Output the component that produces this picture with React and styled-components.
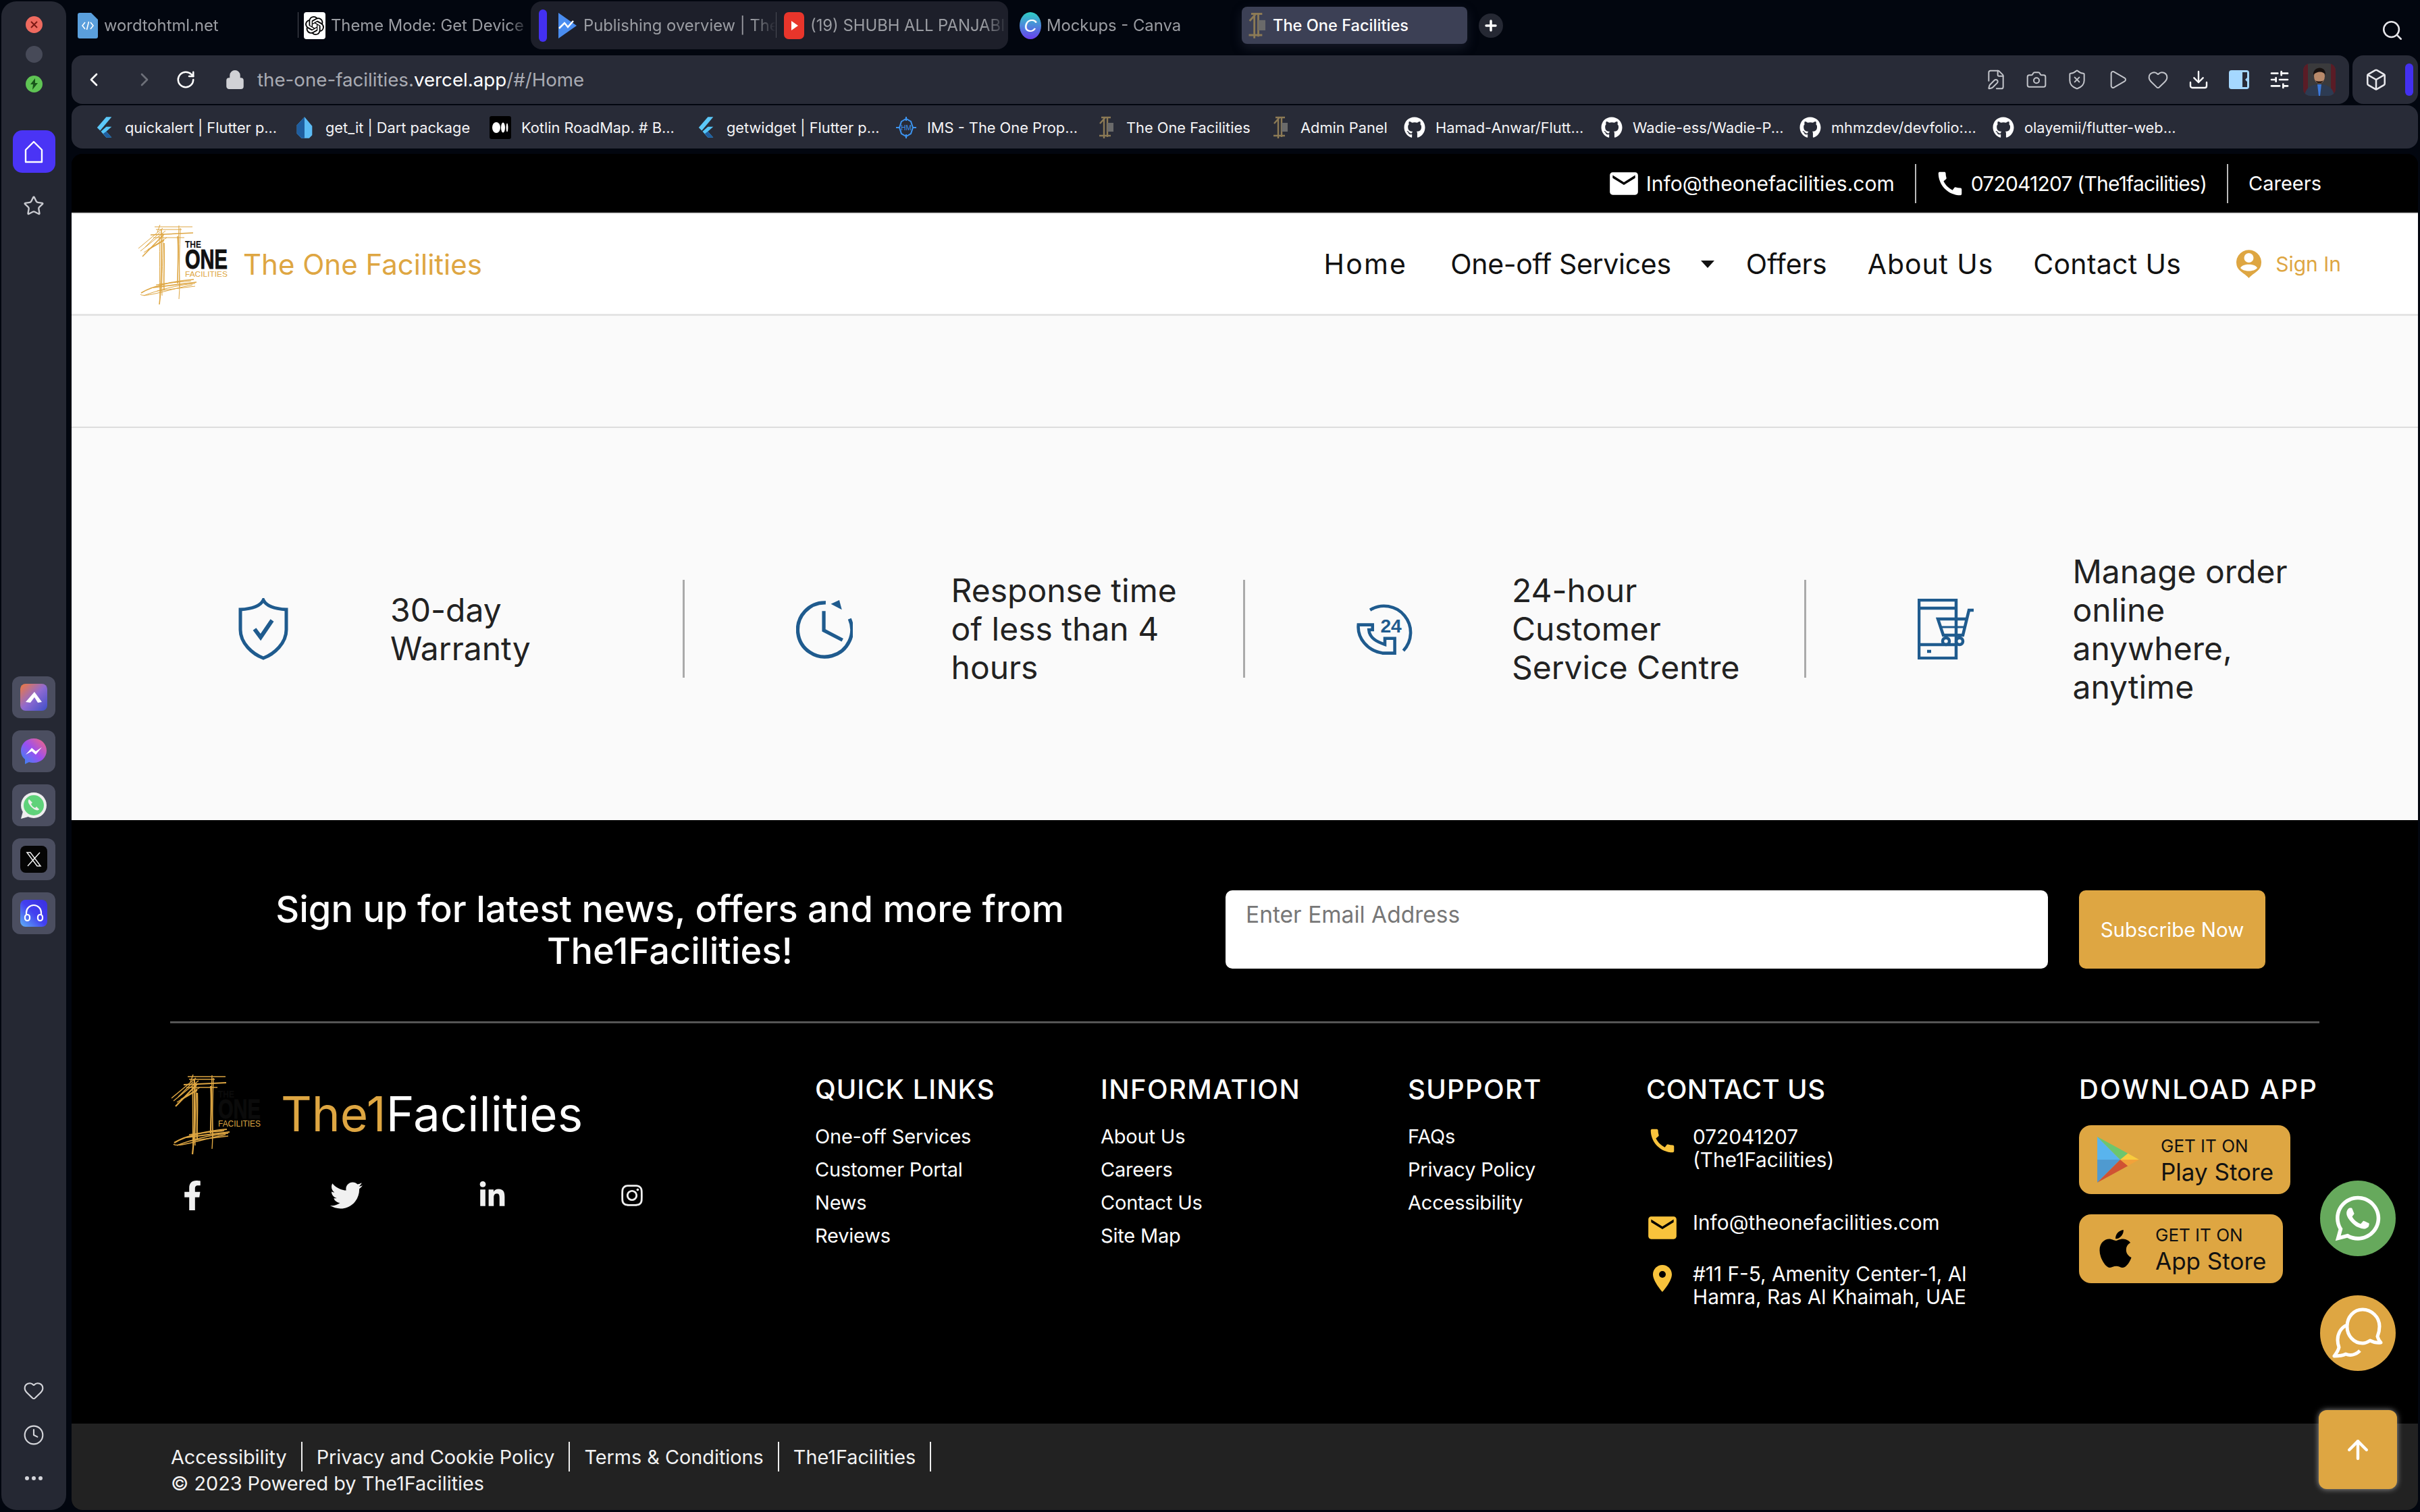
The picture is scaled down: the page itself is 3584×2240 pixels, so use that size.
import React from 'react';
import styled, { createGlobalStyle } from 'styled-components';
import { ChevronLeft, ChevronRight, RotateCw, Lock, FilePen, Camera, ShieldX, Play, Heart, Download, SlidersHorizontal, Box, Star, Clock, Search, Plus, ArrowUp } from 'lucide-react';
import { FaFacebookF, FaTwitter, FaLinkedinIn, FaInstagram, FaWhatsapp, FaApple, FaGithub } from 'react-icons/fa';
import { MdCall, MdEmail, MdLocationOn } from 'react-icons/md';
import { SiOpenai } from 'react-icons/si';

const UI = '"Inter", "Liberation Sans", sans-serif';
const SITE = '"Inter", "Open Sans", sans-serif';
const GOLD = '#dea642';
const BLUE = '#1f5b8e';

const Global = createGlobalStyle`
  html, body { margin: 0; padding: 0; background: #02060f; }
  * { box-sizing: border-box; }
`;

const Screen = styled.div`
  position: relative; width: 3584px; height: 2240px; background: #02060f; display: flex; overflow: hidden; font-family: ${UI};
`;
const Sidebar = styled.aside`
  width: 96px; margin: 2px 0 3px 2px; background: #252833; border-radius: 22px; display: flex; flex-direction: column; align-items: center; padding: 22px 0 44px;
`;
const Light = styled.span`
  width: 25px; height: 25px; border-radius: 50%; background: ${p => p.$c}; margin-bottom: 19px; display: flex; align-items: center; justify-content: center;
`;
const HomeButton = styled.div`
  width: 63px; height: 63px; margin-top: 37px; border-radius: 14px; background: #4a34f5; display: flex; align-items: center; justify-content: center;
`;
const SideStar = styled.div`
  margin-top: 33px; height: 32px; color: #c9cad0; display: flex;
`;
const AppStack = styled.div`
  margin-top: 681px; display: flex; flex-direction: column; gap: 18px;
`;
const AppTile = styled.div`
  width: 64px; height: 62px; border-radius: 12px; background: #4b4e60; display: flex; align-items: center; justify-content: center;
`;
const SideBottom = styled.div`
  margin-top: auto; display: flex; flex-direction: column; align-items: center; gap: 34px; color: #d4d5da;
`;
const MoreDots = styled.div`
  display: flex; gap: 4px; margin-top: 11px;
  i { width: 6px; height: 6px; border-radius: 50%; background: #d4d5da; }
`;
const Main = styled.main`
  width: 3475px; margin: 0 0 3px 8px; display: flex; flex-direction: column;
`;
const TabStrip = styled.div`
  height: 82px; display: flex; align-items: flex-start; padding-top: 2px; color: #9a9ca2;
`;
const Tab = styled.div`
  width: ${p => p.$w}px; height: 71px; padding-left: ${p => p.$pl}px; display: flex; align-items: center; gap: 8px; font-size: 23.8px; overflow: hidden; white-space: nowrap; flex: none;
`;
const TabLabel = styled.span`
  min-width: 0; flex: 1; overflow: hidden; padding-right: ${p => p.$pr || 0}px;
  -webkit-mask-image: linear-gradient(90deg, #000 88%, transparent 100%);
  mask-image: linear-gradient(90deg, #000 88%, transparent 100%);
`;
const TabIcon = styled.span`
  width: 32px; height: 40px; flex: none; display: flex; align-items: center; justify-content: center;
`;
const OpenAiTile = styled.span`
  width: 32px; height: 40px; flex: none; border-radius: 4px; background: #fff; color: #000; display: flex; align-items: center; justify-content: center;
`;
const TabRule = styled.span`
  width: 1px; height: 38px; margin-top: 16px; background: #4a4c55; flex: none;
`;
const TabGroup = styled.div`
  width: 707px; height: 71px; border-radius: 16px; background: #1d1f2a; display: flex; align-items: flex-start; padding-left: 12px; flex: none;
`;
const GroupBar = styled.span`
  width: 12px; height: 48px; margin-top: 12px; border-radius: 6px; background: #4330f0; flex: none;
`;
const ActiveTab = styled.div`
  width: 334px; height: 55px; margin-top: 8px; padding-left: 7px; border-radius: 8px; background: #3c4055; color: #fff; display: flex; align-items: center; gap: 11px; font-size: 23.6px; font-weight: 500; box-shadow: 0 6px 16px rgba(60, 64, 85, .35); flex: none;
`;
const NewTab = styled.div`
  width: 36px; height: 36px; margin: 18px 0 0 17px; border-radius: 50%; background: #252833; color: #fff; display: flex; align-items: center; justify-content: center;
`;
const SearchBtn = styled.div`
  margin: 26px 21px 0 auto; color: #e6e6ea; display: flex;
`;
const AddressRow = styled.div`
  display: flex; gap: 5px; height: 72px;
`;
const AddressBar = styled.div`
  flex: 1; background: #282b37; border-radius: 16px; display: flex; align-items: center; padding: 0 20px 0 17px;
`;
const NavIcon = styled.span`
  width: 32px; display: flex; justify-content: center; margin-right: ${p => p.$mr}px; color: ${p => p.$c};
`;
const Url = styled.div`
  font-size: 27.7px; color: #a9abb3; white-space: nowrap; b { font-weight: 400; color: #fff; }
`;
const ToolIcons = styled.div`
  margin-left: auto; display: flex; align-items: center; color: #c3c5cb;
`;
const ToolIcon = styled.span`
  width: 60px; display: flex; justify-content: center;
`;
const Avatar = styled.span`
  width: 48px; height: 48px; margin-left: 5px; border-radius: 10px; overflow: hidden; display: flex;
`;
const ExtBox = styled.div`
  width: 97px; background: #282b37; border-radius: 16px; display: flex; align-items: center; padding-left: 18px; color: #e8e8ec; gap: 26px;
`;
const ExtBar = styled.span`
  width: 12px; height: 48px; border-radius: 6px; background: #4330f0;
`;
const Bookmarks = styled.div`
  height: 64px; margin-top: 2px; background: #282b37; border-radius: 16px; display: flex; align-items: center; padding: 2px 0 0 31px;
`;
const Bookmark = styled.div`
  width: ${p => p.$w}px; flex: none; display: flex; align-items: center; gap: 14px; font-size: 21.8px; color: #f4f4f6; white-space: nowrap;
`;
const BookIcon = styled.span`
  width: 34px; height: 34px; display: flex; align-items: center; justify-content: center; flex: none; color: #fff;
`;
const Page = styled.div`
  margin-top: 8px; flex: 1; border-radius: 16px; overflow: hidden; display: flex; flex-direction: column; font-family: ${SITE}; background: #000;
`;
const TopBar = styled.div`
  height: 87px; background: #000; color: #fff; display: flex; align-items: center; justify-content: flex-end; padding-right: 143px; font-size: 30px; flex: none;
`;
const TopItem = styled.div`
  display: flex; align-items: center; gap: 8px; white-space: nowrap; font-size: ${p => p.$fs || 30}px; letter-spacing: ${p => p.$ls || 0}px;
`;
const TopRule = styled.span`
  width: 2px; height: 58px; background: #bbb; margin: 0 ${p => p.$r}px 0 ${p => p.$l}px;
`;
const Nav = styled.nav`
  height: 153px; flex: none; background: #fff; border-top: 2px solid #ddd; border-bottom: 3px solid #e4e4e4; display: flex; align-items: center; padding: 0 114px 0 97px;
`;
const BrandTitle = styled.div`
  margin-left: 23px; font-size: 42px; color: ${GOLD}; white-space: nowrap;
`;
const NavLinks = styled.div`
  margin-left: auto; display: flex; align-items: center; color: #111; font-size: 41px;
`;
const NavLink = styled.span`
  margin-left: ${p => p.$ml}px; letter-spacing: ${p => p.$ls || 0}px; white-space: nowrap;
`;
const Caret = styled.span`
  margin-left: ${p => p.$ml}px; width: 0; height: 0; border-left: 10px solid transparent; border-right: 10px solid transparent; border-top: 11px solid #111;
`;
const SignIn = styled.div`
  margin-left: 82px; display: flex; align-items: center; gap: 21px; color: ${GOLD}; font-size: 30px; white-space: nowrap;
`;
const Spacer = styled.div`
  height: 166px; flex: none; background: #fafafa; border-bottom: 2px solid #ddd;
`;
const Features = styled.section`
  height: 581px; flex: none; background: #fafafa; padding: 14px 0 0 77px; display: grid; grid-template-columns: repeat(4, 830.5px); align-items: center;
`;
const Feature = styled.div`
  height: 145px; display: flex; align-items: center; padding-left: 165px; border-right: ${p => (p.$last ? 'none' : '3px solid #aaa')};
`;
const FeatureIcon = styled.div`
  width: 84px; flex: none; display: flex; justify-content: center; margin-right: 146px;
`;
const FeatureText = styled.div`
  font-size: 48px; line-height: 57px; color: #222; white-space: nowrap;
`;
const Footer = styled.footer`
  flex: 1; background: #000; color: #fff; padding: 100px 146px 0;
`;
const Signup = styled.div`
  display: flex; align-items: center;
`;
const SignupTitle = styled.h2`
  width: 1480px; margin: 0 83px 0 0; font-size: 54.2px; line-height: 62px; font-weight: 500; text-align: center; flex: none;
`;
const EmailInput = styled.input`
  width: 1218px; height: 116px; flex: none; border: none; border-radius: 10px; background: #fff; padding: 0 30px 44px; font-family: ${SITE}; font-size: 33.5px;
  &::placeholder { color: #777; opacity: 1; }
`;
const Subscribe = styled.button`
  width: 276px; height: 116px; margin-left: 46px; border: none; border-radius: 10px; background: ${GOLD}; color: #fff; font-family: ${SITE}; font-size: 29.5px; flex: none;
`;
const FooterRule = styled.div`
  height: 3px; margin-top: 74px; background: #555;
`;
const FooterGrid = styled.div`
  margin-top: 73px; display: grid; grid-template-columns: 955px 423px 455px 353px 641px auto;
`;
const BrandRow = styled.div`
  display: flex; align-items: center; gap: 30px;
`;
const FooterBrand = styled.div`
  font-size: 71px; font-weight: 400; white-space: nowrap; span { color: ${GOLD}; }
`;
const Socials = styled.div`
  display: flex; margin-top: 30px;
`;
const Social = styled.a`
  width: 66px; height: 60px; margin-left: ${p => p.$ml}px; display: flex; align-items: center; justify-content: center; color: #f0f0f0;
`;
const ColTitle = styled.h3`
  margin: 0; font-size: 40px; line-height: 50px; font-weight: 500; white-space: nowrap; letter-spacing: ${p => p.$ls}px;
`;
const LinkList = styled.div`
  margin-top: 20px; display: flex; flex-direction: column; font-size: 29px; line-height: 49px; letter-spacing: -0.2px;
`;
const ContactRow = styled.div`
  display: flex; margin-top: ${p => p.$mt}px; font-size: 29.8px; line-height: 34px; white-space: nowrap;
`;
const ContactIcon = styled.span`
  width: 48px; height: 34px; margin-right: 21px; flex: none; display: flex; align-items: flex-start; justify-content: center; color: #f8c33c;
  svg { flex: none; }
`;
const StoreBtn = styled.div`
  width: ${p => p.$w}px; height: 102px; margin-top: ${p => p.$mt}px; border-radius: 18px; background: ${GOLD}; color: #111; display: flex; align-items: center; padding-left: ${p => p.$pl}px; gap: ${p => p.$gap}px;
`;
const StoreText = styled.div`
  display: flex; flex-direction: column; white-space: nowrap; font-size: 35px; line-height: 40px;
  small { font-size: 26px; line-height: 36px; }
`;
const BottomBar = styled.div`
  height: 128px; flex: none; background: #222; color: #f2f2f2; padding: 27px 0 0 147px; font-size: 28.8px;
`;
const LegalRow = styled.div`
  height: 44px; display: flex; align-items: center;
`;
const LegalLink = styled.span`
  height: 44px; display: flex; align-items: center; padding: 0 21px; border-right: 2px solid #eee; white-space: nowrap;
  &:first-child { padding-left: 0; }
`;
const Copyright = styled.div`
  line-height: 36px;
`;
const Floater = styled.div`
  position: absolute; left: 3436px; top: ${p => p.$top}px; width: 112px; height: 112px; border-radius: 50%; background: ${p => p.$bg}; color: #fff; display: flex; align-items: center; justify-content: center;
`;
const ScrollTop = styled.div`
  position: absolute; left: 3434px; top: 2089px; width: 116px; height: 117px; border-radius: 12px; background: ${GOLD}; color: #fff; display: flex; align-items: center; justify-content: center; box-shadow: 0 0 8px rgba(255, 255, 255, .55);
`;

const Flutter = () => (
  <svg width="28" height="34" viewBox="0 0 24 30">
    <path d="M15 1 3 15l4 4L22 1z" fill="#5cc8f8" />
    <path d="M15 14 8 20l7 8h7l-7-8 7-6z" fill="#54c5f8" />
    <path d="M11 23l4-3 7 8h-7z" fill="#1f5e9f" />
  </svg>
);
const Dart = () => (
  <svg width="28" height="34" viewBox="0 0 24 30">
    <path d="M12 1 2 12v11l6 6h10l4-4V13z" fill="#5cbcf6" />
    <path d="M2 12 12 1v28H8l-6-6z" fill="#1f5e9f" />
  </svg>
);
const Medium = () => (
  <svg width="32" height="34" viewBox="0 0 32 34">
    <rect width="32" height="34" rx="3" fill="#000" />
    <ellipse cx="10" cy="17" rx="6" ry="8" fill="#fff" /><ellipse cx="20" cy="17" rx="3" ry="7.5" fill="#fff" /><ellipse cx="26" cy="17" rx="1.4" ry="6.5" fill="#fff" />
  </svg>
);
const Ims = () => (
  <svg width="32" height="34" viewBox="0 0 32 34" fill="none" stroke="#3d94f0" strokeWidth="2">
    <path d="M16 1v6M16 27v6M1 17h6M25 17h6M9 8l7-4 7 4 3 9-3 9-7 4-7-4-3-9z" />
    <text x="16" y="21" fontSize="10" fontFamily="Liberation Sans" textAnchor="middle" fill="#3d94f0" stroke="none">HM</text>
  </svg>
);
const MiniLogo = ({ w = 24, h = 36 }) => (
  <svg width={w} height={h} viewBox="0 0 24 36" fill="none">
    <path d="M10 2v32M15 2v30M4 12 12 3M6 3h14M3 30h17" stroke="#8c7a55" strokeWidth="2.4" />
    <rect x="15" y="11" width="9" height="13" fill="#6a6a6a" />
  </svg>
);

const SCRIBBLE = [
  'M36 10C35 40 38 80 33 121', 'M38 16C39 50 36 80 37 108', 'M33 20C34 50 33 80 34 112', 'M40 30C41 60 39 80 40 100',
  'M62 4C60 40 65 80 62 113', 'M64 8C63 40 62 70 63 95', 'M60 20C62 40 60 70 60 90',
  'M2 38L38 8', 'M5 42L42 12', 'M8 50L40 17', 'M12 36L34 14', 'M10 44L44 22', 'M16 40L40 26',
  'M26 6H82', 'M28 10H66', 'M20 18L83 15', 'M24 22H70', 'M34 3L30 14',
  'M6 104C25 92 60 86 84 84', 'M10 108C30 100 60 92 86 90', 'M5 106C10 112 50 98 82 92', 'M24 96L88 88', 'M30 101L86 94', 'M28 92C50 88 70 88 80 86',
];
const LogoSvg = styled.svg`
  overflow: visible; flex: none;
`;
const Logo = ({ dark }) => (
  <LogoSvg width="134" height="122" viewBox="0 0 134 122" fill="none">
    {SCRIBBLE.map((d, i) => <path key={d} d={d} stroke={GOLD} strokeWidth={(i % 3 === 0 ? 1.6 : 1) * (dark ? 1.4 : 1)} />)}
    <g fontFamily="Liberation Sans" fontWeight="700">
      <text x="71" y="37" fontSize="15" textLength="24" lengthAdjust="spacingAndGlyphs" fill={dark ? '#0b0b0b' : '#111'}>THE</text>
      <text x="71" y="68" fontSize="40" textLength="63" lengthAdjust="spacingAndGlyphs" fill={dark ? '#0b0b0b' : '#111'} stroke={dark ? '#0b0b0b' : '#111'} strokeWidth="1">ONE</text>
      <text x="71" y="80" fontSize={dark ? 13 : 11} fontWeight="400" textLength="63" lengthAdjust="spacingAndGlyphs" fill={GOLD}>FACILITIES</text>
    </g>
  </LogoSvg>
);
const ShieldIcon = () => (
  <svg width="76" height="92" viewBox="0 0 76 92" fill="none" stroke={BLUE} strokeWidth="5">
    <path d="M38 3C34 11 24 16 4 17V47C4 67 22 83 38 89C54 83 72 67 72 47V17C52 16 42 11 38 3Z" />
    <path d="M25 46L34 58L51 33" strokeWidth="6" />
  </svg>
);
const ClockIcon = () => (
  <svg width="88" height="90" viewBox="0 0 88 90" fill="none" stroke={BLUE} strokeWidth="5.5">
    <path d="M46 4A42 42 0 1 0 83 29" />
    <path d="M54 6L67 0L71 15Z" fill={BLUE} stroke="none" />
    <path d="M43 17V47L72 62" />
  </svg>
);
const Support24 = () => (
  <svg width="92" height="90" viewBox="0 0 92 90" fill="none" stroke={BLUE} strokeWidth="5">
    <path d="M22 14A43 43 0 0 1 76 80" />
    <path d="M3 38H26V46H20C21 60 34 66 46 70V60H62V84H42C18 80 1 60 3 38Z" />
    <text x="56" y="50" fontSize="31" fontWeight="700" fontFamily="Liberation Sans" textAnchor="middle" fill={BLUE} stroke="none">24</text>
  </svg>
);
const CartIcon = () => (
  <svg width="84" height="90" viewBox="0 0 84 90" fill="none" stroke={BLUE} strokeWidth="4.5">
    <rect x="2" y="2" width="55" height="86" />
    <path d="M2 14H57M2 68H57M14 78H20" />
    <path d="M83 17H76L67 54H38L30 30H72" />
    <path d="M34 42H70" strokeWidth="3" />
    <circle cx="42" cy="63" r="5" /><circle cx="62" cy="63" r="5" />
  </svg>
);
const SignInIcon = () => (
  <svg width="37" height="42" viewBox="0 0 37 42">
    <path d="M18.5 42C15 37 5 33 1.5 26A18.5 18.5 0 1 1 35.5 26C32 33 22 37 18.5 42Z" fill={GOLD} />
    <circle cx="18.5" cy="12" r="7" fill="#fff" />
    <path d="M6 27C9 20 28 20 31 27C26 33 11 33 6 27Z" fill="#fff" />
  </svg>
);
const PlayLogo = () => (
  <svg width="62" height="68" viewBox="0 0 60 66">
    <path d="M0 0 33 33H0z" fill="#59b4ee" /><path d="M0 66 33 33H0z" fill="#4f9ad0" />
    <path d="M0 0 44 24 33 33z" fill="#6cc66e" /><path d="M0 66 44 42 33 33z" fill="#cf5233" />
    <path d="M44 24 60 33H33z" fill="#f8cb3f" /><path d="M44 42 60 33H33z" fill="#f2a23a" />
  </svg>
);
const Avatarface = () => (
  <svg width="48" height="48" viewBox="0 0 48 48">
    <rect width="48" height="48" fill="#3a3a3c" /><rect width="7" height="48" fill="#5a1c26" /><rect x="41" width="7" height="48" fill="#5a1c26" />
    <path d="M2 48C4 34 14 31 24 31S44 34 46 48z" fill="#2d3b52" />
    <path d="M21 31h6l-2 17h-2z" fill="#3c78d8" />
    <ellipse cx="24" cy="19" rx="8" ry="11" fill="#b98a6a" />
    <path d="M15 17C14 4 34 2 33 17C30 11 20 11 15 17Z" fill="#17110f" />
    <path d="M18 25C21 31 27 31 30 25C28 27 20 27 18 25Z" fill="#221815" />
  </svg>
);

const TABS_BOOK = [
  [297, <Flutter />, 'quickalert | Flutter p...'], [290, <Dart />, 'get_it | Dart package'], [304, <Medium />, 'Kotlin RoadMap. # B...'],
  [297, <Flutter />, 'getwidget | Flutter p...'], [295, <Ims />, 'IMS - The One Prop...'], [258, <MiniLogo />, 'The One Facilities'],
  [200, <MiniLogo />, 'Admin Panel'], [292, <FaGithub size={32} />, 'Hamad-Anwar/Flutt...'], [294, <FaGithub size={32} />, 'Wadie-ess/Wadie-P...'],
  [286, <FaGithub size={32} />, 'mhmzdev/devfolio:...'], [280, <FaGithub size={32} />, 'olayemii/flutter-web...'],
];
const COLS = [
  ['QUICK LINKS', 1, ['One-off Services', 'Customer Portal', 'News', 'Reviews']],
  ['INFORMATION', 1.4, ['About Us', 'Careers', 'Contact Us', 'Site Map']],
  ['SUPPORT', 1.3, ['FAQs', 'Privacy Policy', 'Accessibility']],
];

export default function App() {
  return (
    <Screen>
      <Global />
      <Sidebar>
        <Light $c="#ee6a5f"><svg width="13" height="13" viewBox="0 0 13 13" stroke="#7c1a14" strokeWidth="2"><path d="M2 2l9 9M11 2l-9 9" /></svg></Light>
        <Light $c="#474a58" />
        <Light $c="#5fc454"><svg width="13" height="17" viewBox="0 0 13 17" fill="#18561a"><path d="M8 0 1 9h4l-1 8 8-10H8z" /></svg></Light>
        <HomeButton><svg width="34" height="36" viewBox="0 0 34 36" fill="none" stroke="#fff" strokeWidth="2.4"><path d="M17 3 5 15v18h24V15z" strokeLinejoin="round" /></svg></HomeButton>
        <SideStar><Star size={32} strokeWidth={1.8} /></SideStar>
        <AppStack>
          <AppTile><svg width="40" height="40" viewBox="0 0 40 40"><defs><linearGradient id="ar" x1="0" y1="0" x2="1" y2="1"><stop offset="0" stopColor="#f0793b" /><stop offset=".5" stopColor="#8f6ad0" /><stop offset="1" stopColor="#3d4fc8" /></linearGradient></defs><rect width="40" height="40" rx="8" fill="url(#ar)" /><path d="M8 27 21 12l11 15-6 1-5-8-6 8z" fill="#fff" /></svg></AppTile>
          <AppTile><svg width="40" height="40" viewBox="0 0 40 40"><defs><linearGradient id="ms" x1="0" y1="1" x2="1" y2="0"><stop offset="0" stopColor="#2f8cf5" /><stop offset=".5" stopColor="#9b4ef0" /><stop offset="1" stopColor="#f76a7a" /></linearGradient></defs><path d="M20 1C9 1 1 9 1 19c0 6 2.500 10 6 13v7l6-3c2 .6 4.500 1 7 1 11 0 19-8 19-18S31 1 20 1z" fill="url(#ms)" /><path d="M8 25 17 15l6 5 9-6-9 11-6-5z" fill="#fff" /></svg></AppTile>
          <AppTile><svg width="42" height="42" viewBox="0 0 42 42"><circle cx="21" cy="21" r="19" fill="#eee" /><circle cx="21" cy="21" r="15" fill="#5fd27a" /><path d="M2 41l3-11 8 8z" fill="#eee" /><path d="M14 12c-3 3 0 8 4 12s9 6 11 3l-4-4-2 2c-3-1-5-3-6-6l2-2z" fill="#eee" /></svg></AppTile>
          <AppTile><svg width="40" height="40" viewBox="0 0 40 40"><rect width="40" height="40" rx="8" fill="#050505" /><path d="M10 10h5l15 20h-5zM29 10 11 30" fill="none" stroke="#f2f2f2" strokeWidth="1.500" /></svg></AppTile>
          <AppTile><svg width="40" height="40" viewBox="0 0 40 40" fill="none"><defs><linearGradient id="hp" x1="0" y1="1" x2="1" y2="0"><stop offset="0" stopColor="#5fb2f5" /><stop offset=".5" stopColor="#4340f0" /><stop offset="1" stopColor="#3a2fe0" /></linearGradient></defs><rect width="40" height="40" rx="8" fill="url(#hp)" /><path d="M9 23v-4a11 11 0 0 1 22 0v4" stroke="#fff" strokeWidth="2.200" /><rect x="7" y="22" width="7" height="9" rx="3.500" stroke="#fff" strokeWidth="2.200" /><rect x="26" y="22" width="7" height="9" rx="3.500" stroke="#fff" strokeWidth="2.200" /></svg></AppTile>
        </AppStack>
        <SideBottom>
          <Heart size={32} strokeWidth={1.6} />
          <Clock size={32} strokeWidth={1.6} />
          <MoreDots><i /><i /><i /></MoreDots>
        </SideBottom>
      </Sidebar>
      <Main>
        <TabStrip>
          <Tab $w={335} $pl={8}>
            <TabIcon><svg width="30" height="38" viewBox="0 0 30 38"><path d="M3 0h17l10 10v25a3 3 0 0 1-3 3H3a3 3 0 0 1-3-3V3a3 3 0 0 1 3-3z" fill="#5a9fdc" /><path d="M11 14l-4 5 4 5M19 14l4 5-4 5M16.500 13l-3 12" fill="none" stroke="#fff" strokeWidth="1.600" /></svg></TabIcon>
            <TabLabel>wordtohtml.net</TabLabel>
          </Tab>
          <TabRule />
          <Tab $w={344} $pl={8}>
            <OpenAiTile><SiOpenai size={28} /></OpenAiTile>
            <TabLabel $pr={16}>Theme Mode: Get Device</TabLabel>
          </Tab>
          <TabGroup>
            <GroupBar />
            <Tab $w={339} $pl={14}>
              <TabIcon><svg width="28" height="40" viewBox="0 0 28 40"><path d="M1 1 28 20 1 39z" fill="#4a8df0" /><path d="M2 24l8-8 5 6 8-9" fill="none" stroke="#fff" strokeWidth="2.500" /></svg></TabIcon>
              <TabLabel $pr={8}>Publishing overview | The One</TabLabel>
            </Tab>
            <TabRule />
            <Tab $w={342} $pl={10}>
              <TabIcon><svg width="30" height="40" viewBox="0 0 30 40"><rect width="30" height="40" rx="7" fill="#e8352b" /><path d="M11 13l10 7-10 7z" fill="#fff" /></svg></TabIcon>
              <TabLabel $pr={14}>(19) SHUBH ALL PANJABI</TabLabel>
            </Tab>
          </TabGroup>
          <Tab $w={346} $pl={17}>
            <TabIcon><svg width="32" height="40" viewBox="0 0 32 40"><defs><linearGradient id="cv" x1="0" y1="0" x2="0" y2="1"><stop offset="0" stopColor="#2fcfc4" /><stop offset="1" stopColor="#6a3ff0" /></linearGradient></defs><ellipse cx="16" cy="20" rx="16" ry="20" fill="url(#cv)" /><text x="16" y="29" fontSize="26" fontStyle="italic" fontFamily="Liberation Sans" textAnchor="middle" fill="#fff">C</text></svg></TabIcon>
            <TabLabel>Mockups - Canva</TabLabel>
          </Tab>
          <ActiveTab><MiniLogo w={28} h={42} />The One Facilities</ActiveTab>
          <NewTab><Plus size={24} strokeWidth={3.500} /></NewTab>
          <SearchBtn><Search size={34} strokeWidth={1.800} /></SearchBtn>
        </TabStrip>
        <AddressRow>
          <AddressBar>
            <NavIcon $mr={43} $c="#fff"><ChevronLeft size={32} strokeWidth={2} /></NavIcon>
            <NavIcon $mr={29} $c="#6d7079"><ChevronRight size={32} strokeWidth={2} /></NavIcon>
            <NavIcon $mr={41} $c="#fff"><RotateCw size={30} strokeWidth={2} /></NavIcon>
            <NavIcon $mr={17} $c="#d0d1d5"><Lock size={30} strokeWidth={2.400} fill="#d0d1d5" /></NavIcon>
            <Url>the-one-facilities.<b>vercel.app</b>/#/Home</Url>
            <ToolIcons>
              <ToolIcon><FilePen size={32} strokeWidth={1.500} /></ToolIcon>
              <ToolIcon><Camera size={32} strokeWidth={1.500} /></ToolIcon>
              <ToolIcon><ShieldX size={32} strokeWidth={1.500} /></ToolIcon>
              <ToolIcon><Play size={32} strokeWidth={1.500} /></ToolIcon>
              <ToolIcon><Heart size={32} strokeWidth={1.500} /></ToolIcon>
              <ToolIcon><Download size={32} strokeWidth={1.800} color="#fff" /></ToolIcon>
              <ToolIcon><svg width="30" height="30" viewBox="0 0 30 30"><path d="M4 1h22a4 4 0 0 1 4 4v20a4 4 0 0 1-4 4H4a4 4 0 0 1-4-4V5a4 4 0 0 1 4-4z" fill="#a5d8ff" /><path d="M20 4h7v8l-3 3 3 3v8h-7z" fill="#282b37" /></svg></ToolIcon>
              <ToolIcon><SlidersHorizontal size={32} strokeWidth={2} color="#fff" /></ToolIcon>
              <Avatar><Avatarface /></Avatar>
            </ToolIcons>
          </AddressBar>
          <ExtBox><Box size={34} strokeWidth={1.800} /><ExtBar /></ExtBox>
        </AddressRow>
        <Bookmarks>
          {TABS_BOOK.map(([w, icon, label]) => (
            <Bookmark key={label} $w={w}><BookIcon>{icon}</BookIcon>{label}</Bookmark>
          ))}
        </Bookmarks>
        <Page>
          <TopBar>
            <TopItem><MdEmail size={50} />Info@theonefacilities.com</TopItem>
            <TopRule $l={30} $r={27} />
            <TopItem $ls={-0.8}><MdCall size={46} />072041207 (The1facilities)</TopItem>
            <TopRule $l={30} $r={30} />
            <TopItem $fs={29}>Careers</TopItem>
          </TopBar>
          <Nav>
            <Logo />
            <BrandTitle>The One Facilities</BrandTitle>
            <NavLinks>
              <NavLink $ml={0} $ls={2.2}>Home</NavLink>
              <NavLink $ml={64} $ls={-0.3}>One-off Services</NavLink>
              <Caret $ml={44} />
              <NavLink $ml={47}>Offers</NavLink>
              <NavLink $ml={60} $ls={0.9}>About Us</NavLink>
              <NavLink $ml={59} $ls={0.3}>Contact Us</NavLink>
              <SignIn><SignInIcon />Sign In</SignIn>
            </NavLinks>
          </Nav>
          <Spacer />
          <Features>
            <Feature><FeatureIcon><ShieldIcon /></FeatureIcon><FeatureText>30-day<br />Warranty</FeatureText></Feature>
            <Feature><FeatureIcon><ClockIcon /></FeatureIcon><FeatureText>Response time<br />of less than 4<br />hours</FeatureText></Feature>
            <Feature><FeatureIcon><Support24 /></FeatureIcon><FeatureText>24-hour<br />Customer<br />Service Centre</FeatureText></Feature>
            <Feature $last><FeatureIcon><CartIcon /></FeatureIcon><FeatureText>Manage order<br />online<br />anywhere,<br />anytime</FeatureText></Feature>
          </Features>
          <Footer>
            <Signup>
              <SignupTitle>Sign up for latest news, offers and more from The1Facilities!</SignupTitle>
              <EmailInput placeholder="Enter Email Address" />
              <Subscribe>Subscribe Now</Subscribe>
            </Signup>
            <FooterRule />
            <FooterGrid>
              <div>
                <BrandRow>
                  <Logo dark />
                  <FooterBrand><span>The1</span>Facilities</FooterBrand>
                </BrandRow>
                <Socials>
                  <Social $ml={0}><FaFacebookF size={44} /></Social>
                  <Social $ml={162}><FaTwitter size={48} /></Social>
                  <Social $ml={150}><FaLinkedinIn size={42} /></Social>
                  <Social $ml={141}><FaInstagram size={36} /></Social>
                </Socials>
              </div>
              {COLS.map(([title, ls, links]) => (
                <div key={title}>
                  <ColTitle $ls={ls}>{title}</ColTitle>
                  <LinkList>{links.map(l => <span key={l}>{l}</span>)}</LinkList>
                </div>
              ))}
              <div>
                <ColTitle $ls={0.4}>CONTACT US</ColTitle>
                <ContactRow $mt={28}><ContactIcon><MdCall size={46} /></ContactIcon><span>072041207<br />(The1Facilities)</span></ContactRow>
                <ContactRow $mt={59}><ContactIcon><MdEmail size={50} /></ContactIcon><span>Info@theonefacilities.com</span></ContactRow>
                <ContactRow $mt={42}><ContactIcon><MdLocationOn size={48} /></ContactIcon><span>#11 F-5, Amenity Center-1, Al<br />Hamra, Ras Al Khaimah, UAE</span></ContactRow>
              </div>
              <div>
                <ColTitle $ls={2.2}>DOWNLOAD APP</ColTitle>
                <StoreBtn $w={313} $mt={28} $pl={27} $gap={32}><PlayLogo /><StoreText><small>GET IT ON</small>Play Store</StoreText></StoreBtn>
                <StoreBtn $w={302} $mt={30} $pl={22} $gap={27}><FaApple size={64} color="#000" /><StoreText><small>GET IT ON</small>App Store</StoreText></StoreBtn>
              </div>
            </FooterGrid>
          </Footer>
          <BottomBar>
            <LegalRow>
              <LegalLink>Accessibility</LegalLink>
              <LegalLink>Privacy and Cookie Policy</LegalLink>
              <LegalLink>Terms &amp; Conditions</LegalLink>
              <LegalLink>The1Facilities</LegalLink>
            </LegalRow>
            <Copyright>© 2023 Powered by The1Facilities</Copyright>
          </BottomBar>
        </Page>
      </Main>
      <Floater $top={1749} $bg="#66a95c"><FaWhatsapp size={76} /></Floater>
      <Floater $top={1919} $bg={GOLD}>
        <svg width="76" height="76" viewBox="0 0 76 76" fill="none" stroke="#fff" strokeWidth="5" strokeLinejoin="round">
          <path d="M45 3C32 3 22 14 22 28C22 42 32 53 45 53C50 53 53 51 56 49C60 51 66 53 72 52C69 49 68 46 67 43C69 38 70 33 70 28C70 14 58 3 45 3Z" />
          <path d="M22 26C12 30 8 40 8 48C8 53 9 56 10 59C9 64 6 68 3 72C10 72 16 71 20 69C27 72 35 70 41 64" />
        </svg>
      </Floater>
      <ScrollTop><ArrowUp size={44} strokeWidth={2.400} /></ScrollTop>
    </Screen>
  );
}
